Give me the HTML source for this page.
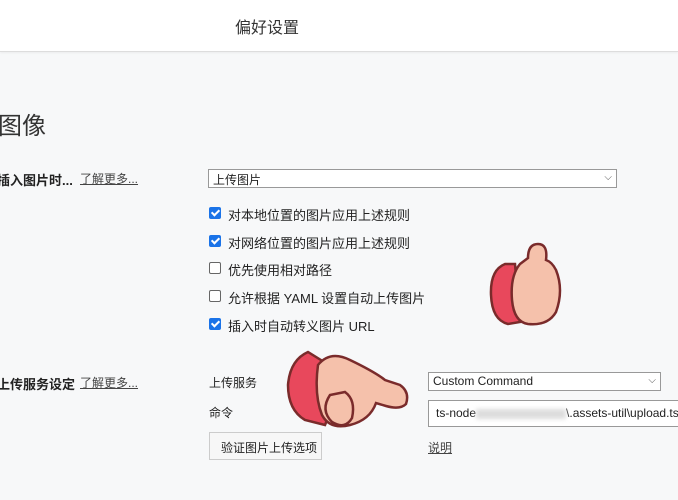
<!DOCTYPE html>
<html><head><meta charset="utf-8"><style>
body{margin:0;width:678px;height:500px;overflow:hidden;background:#f7f8f9;font-family:"Liberation Sans","Noto Sans CJK SC",sans-serif;color:#222;position:relative}
.hdr{position:absolute;left:0;top:0;width:678px;height:51px;background:#fff;border-bottom:1px solid #ddd;box-shadow:0 1px 2px rgba(0,0,0,.05)}
.hdr span{position:absolute;left:235px;top:14px;font-size:16px;color:#333}
.a{position:absolute;white-space:nowrap;font-size:13px}
.lnk{text-decoration:underline;color:#444}
.sel{position:absolute;background:#fff;border:1px solid #999;height:17px;box-sizing:border-box;overflow:hidden}
.cb{position:absolute;width:12px;height:12px;border-radius:2px;box-sizing:border-box}
.on{background:#1a73e8}
.off{border:1px solid #666;background:#fff}
.on:after{content:"";position:absolute;left:3.5px;top:1px;width:3px;height:6px;border:solid #fff;border-width:0 2px 2px 0;transform:rotate(45deg)}
.chev{position:absolute;right:4px;top:2px;font-size:10px;color:#555}
</style></head><body>
<div class="hdr"><span>偏好设置</span></div>
<div class="a" style="left:-2px;top:106px;font-size:24px;color:#333">图像</div>
<div class="a" style="left:-3px;top:170px;font-weight:bold">插入图片时...</div>
<div class="a lnk" style="left:80px;top:170px;font-size:12px">了解更多...</div>
<div class="sel" style="left:208px;top:169px;width:409px;height:19px"><span class="a" style="left:4px;top:1px;font-size:12px">上传图片</span><span class="chev">⌵</span></div>
<div class="cb on" style="left:209px;top:207px"></div><div class="a" style="left:228px;top:205px">对本地位置的图片应用上述规则</div>
<div class="cb on" style="left:209px;top:235px"></div><div class="a" style="left:228px;top:233px">对网络位置的图片应用上述规则</div>
<div class="cb off" style="left:209px;top:262px"></div><div class="a" style="left:228px;top:260px">优先使用相对路径</div>
<div class="cb off" style="left:209px;top:290px"></div><div class="a" style="left:228px;top:288px">允许根据 YAML 设置自动上传图片</div>
<div class="cb on" style="left:209px;top:318px"></div><div class="a" style="left:228px;top:316px">插入时自动转义图片 URL</div>
<div class="a" style="left:-3px;top:374px;font-weight:bold">上传服务设定</div>
<div class="a lnk" style="left:80px;top:374px;font-size:12px">了解更多...</div>
<div class="a" style="left:209px;top:374px;font-size:12px">上传服务</div>
<div class="sel" style="left:428px;top:372px;width:233px;height:19px"><span class="a" style="left:4px;top:1px;font-size:12px">Custom Command</span><span class="chev">⌵</span></div>
<div class="a" style="left:209px;top:404px;font-size:12px">命令</div>
<div class="sel" style="left:428px;top:400px;width:260px;height:27px"><span class="a" style="left:7px;top:5px;font-size:12px">ts-node<span style="display:inline-block;width:90px;height:10px;background:#ddd;filter:blur(2px);vertical-align:middle"></span>\.assets-util\upload.ts</span></div>
<div style="position:absolute;left:209px;top:432px;width:113px;height:28px;border:1px solid #ccc;background:#f7f7f7;box-sizing:border-box"></div>
<div class="a" style="left:221px;top:439px;font-size:12px">验证图片上传选项</div>
<div class="a lnk" style="left:428px;top:439px;font-size:12px">说明</div>
<svg style="position:absolute;left:0;top:0" width="678" height="500">
<g stroke="#7a2b2b" stroke-width="2.5">
<path d="M505 264 Q490 270 491 295 Q492 320 508 324 L520 322 L515 264 Z" fill="#e8485c"/>
<path d="M520 264 L528 258 Q528 244 538 244 Q548 244 546 260 Q552 262 556 270 Q564 290 556 312 Q548 326 528 324 Q514 322 512 300 Q510 276 520 264 Z" fill="#f5c1ab"/>
<path d="M308 352 Q290 360 288 385 Q288 410 305 420 L325 425 L345 375 Z" fill="#e8485c"/>
<path d="M318 365 Q330 350 350 360 Q375 372 385 380 L400 385 Q410 392 406 404 Q400 410 386 406 L376 403 Q370 420 350 425 Q330 430 322 415 Q314 395 318 365 Z" fill="#f5c1ab"/>
<path d="M330 395 Q320 410 332 422 Q345 430 352 418 Q356 400 345 392 Z" fill="#f5c1ab"/>
</g></svg>
</body></html>
